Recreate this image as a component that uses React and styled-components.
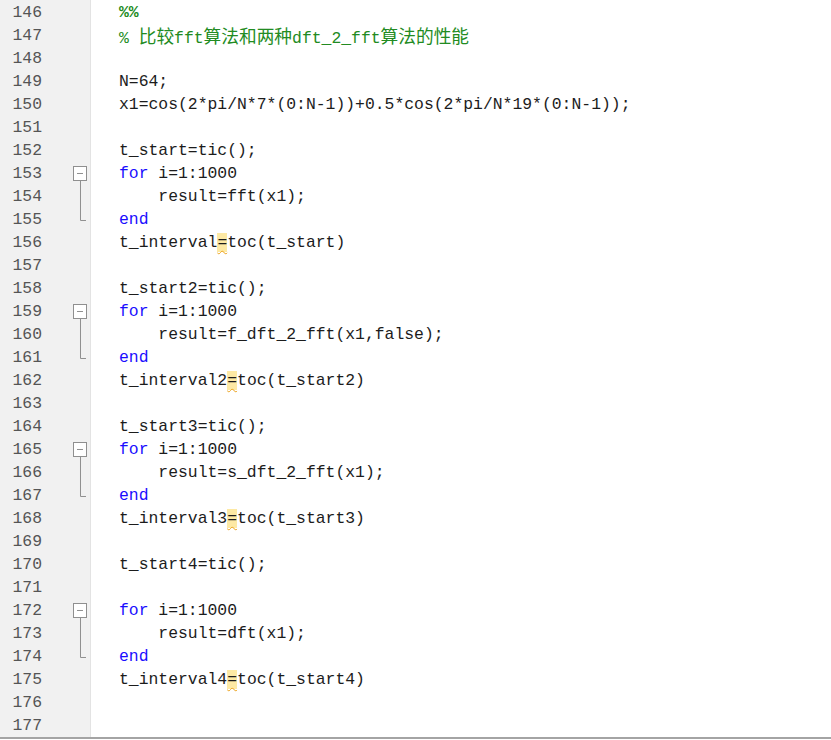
import styled, { createGlobalStyle } from 'styled-components';

const ROW = 23.02;

const GlobalStyle = createGlobalStyle`
  html, body {
    margin: 0;
    padding: 0;
    background: #ffffff;
  }
  body {
    overflow: hidden;
  }
`;

const Editor = styled.div`
  display: flex;
  height: 737px;
  border-bottom: 2px solid #a4a4a4;
  overflow: hidden;
  font-family: 'Liberation Mono', 'Noto Sans CJK SC', monospace;
  font-size: 16.4px;
  line-height: ${ROW}px;
  color: #1c1c1c;
`;

const Gutter = styled.div`
  flex: none;
  width: 90px;
  padding-top: 1px;
  background: #f1f1f1;
  border-right: 1px solid #e3e3e3;
`;

const GutterRow = styled.div`
  display: grid;
  grid-template-columns: 62px 28px;
  height: ${ROW}px;
`;

const LineNo = styled.span`
  text-align: right;
  padding-right: 20px;
  color: #555555;
`;

const FoldCell = styled.span`
  display: block;
  height: ${ROW}px;

  svg {
    display: block;
  }
`;

const Code = styled.div`
  flex: 1;
  padding-top: 1px;
  padding-left: 28px;
`;

const CodeLine = styled.div`
  height: ${ROW}px;
  white-space: pre;
`;

const tokenColors = {
  plain: '#1c1c1c',
  kw: '#1a0dff',
  cmt: '#228b22',
  cell: '#228b22',
  warn: '#1c1c1c',
};

const Tok = styled.span`
  color: ${({ $kind }) => tokenColors[$kind]};
  font-weight: ${({ $kind }) => ($kind === 'cell' ? 700 : 400)};
  background: ${({ $kind }) => ($kind === 'warn' ? '#fde9a4' : 'transparent')};
  text-decoration: ${({ $kind }) => ($kind === 'warn' ? 'underline wavy #eba21c' : 'none')};
  text-decoration-thickness: 1px;
  text-underline-offset: 3px;
`;

const Cjk = styled.span`
  font-family: 'Noto Sans CJK SC', sans-serif;
  font-size: 17.7px;
`;

// split comment text so the Chinese part gets its own wider font
const renderText = (text) =>
  text.split(/([\u4e00-\u9fff]+)/).map((part, i) =>
    /[\u4e00-\u9fff]/.test(part) ? <Cjk key={i}>{part}</Cjk> : part
  );

const lines = [
  { n: 146, toks: [['cell', '%%']] },
  { n: 147, toks: [['cmt', '% 比较fft算法和两种dft_2_fft算法的性能']] },
  { n: 148, toks: [] },
  { n: 149, toks: [['plain', 'N=64;']] },
  { n: 150, toks: [['plain', 'x1=cos(2*pi/N*7*(0:N-1))+0.5*cos(2*pi/N*19*(0:N-1));']] },
  { n: 151, toks: [] },
  { n: 152, toks: [['plain', 't_start=tic();']] },
  { n: 153, fold: 'start', toks: [['kw', 'for'], ['plain', ' i=1:1000']] },
  { n: 154, fold: 'mid', toks: [['plain', '    result=fft(x1);']] },
  { n: 155, fold: 'end', toks: [['kw', 'end']] },
  { n: 156, toks: [['plain', 't_interval'], ['warn', '='], ['plain', 'toc(t_start)']] },
  { n: 157, toks: [] },
  { n: 158, toks: [['plain', 't_start2=tic();']] },
  { n: 159, fold: 'start', toks: [['kw', 'for'], ['plain', ' i=1:1000']] },
  { n: 160, fold: 'mid', toks: [['plain', '    result=f_dft_2_fft(x1,false);']] },
  { n: 161, fold: 'end', toks: [['kw', 'end']] },
  { n: 162, toks: [['plain', 't_interval2'], ['warn', '='], ['plain', 'toc(t_start2)']] },
  { n: 163, toks: [] },
  { n: 164, toks: [['plain', 't_start3=tic();']] },
  { n: 165, fold: 'start', toks: [['kw', 'for'], ['plain', ' i=1:1000']] },
  { n: 166, fold: 'mid', toks: [['plain', '    result=s_dft_2_fft(x1);']] },
  { n: 167, fold: 'end', toks: [['kw', 'end']] },
  { n: 168, toks: [['plain', 't_interval3'], ['warn', '='], ['plain', 'toc(t_start3)']] },
  { n: 169, toks: [] },
  { n: 170, toks: [['plain', 't_start4=tic();']] },
  { n: 171, toks: [] },
  { n: 172, fold: 'start', toks: [['kw', 'for'], ['plain', ' i=1:1000']] },
  { n: 173, fold: 'mid', toks: [['plain', '    result=dft(x1);']] },
  { n: 174, fold: 'end', toks: [['kw', 'end']] },
  { n: 175, toks: [['plain', 't_interval4'], ['warn', '='], ['plain', 'toc(t_start4)']] },
  { n: 176, toks: [] },
  { n: 177, toks: [] },
];

const FoldMark = ({ kind }) => (
  <svg width="28" height={ROW} viewBox={`0 0 28 ${ROW}`}>
    {kind === 'start' && (
      <g stroke="#8f8f8f" strokeWidth="1" fill="none">
        <rect x="11.5" y="4.5" width="13" height="14" fill="#ffffff" />
        <line x1="15" y1="11.5" x2="21" y2="11.5" />
        <line x1="18.5" y1="18.5" x2="18.5" y2={ROW} />
      </g>
    )}
    {kind === 'mid' && (
      <line x1="18.5" y1="0" x2="18.5" y2={ROW} stroke="#8f8f8f" strokeWidth="1" />
    )}
    {kind === 'end' && (
      <path d="M18.5 0 V12.5 H24" stroke="#8f8f8f" strokeWidth="1" fill="none" />
    )}
  </svg>
);

const App = () => {
  return (
    <>
      <GlobalStyle />
      <Editor>
        <Gutter>
          {lines.map((line) => (
            <GutterRow key={line.n}>
              <LineNo>{line.n}</LineNo>
              <FoldCell>{line.fold && <FoldMark kind={line.fold} />}</FoldCell>
            </GutterRow>
          ))}
        </Gutter>
        <Code>
          {lines.map((line) => (
            <CodeLine key={line.n}>
              {line.toks.map(([kind, text], i) => (
                <Tok key={i} $kind={kind}>
                  {renderText(text)}
                </Tok>
              ))}
            </CodeLine>
          ))}
        </Code>
      </Editor>
    </>
  );
};

export default App;
